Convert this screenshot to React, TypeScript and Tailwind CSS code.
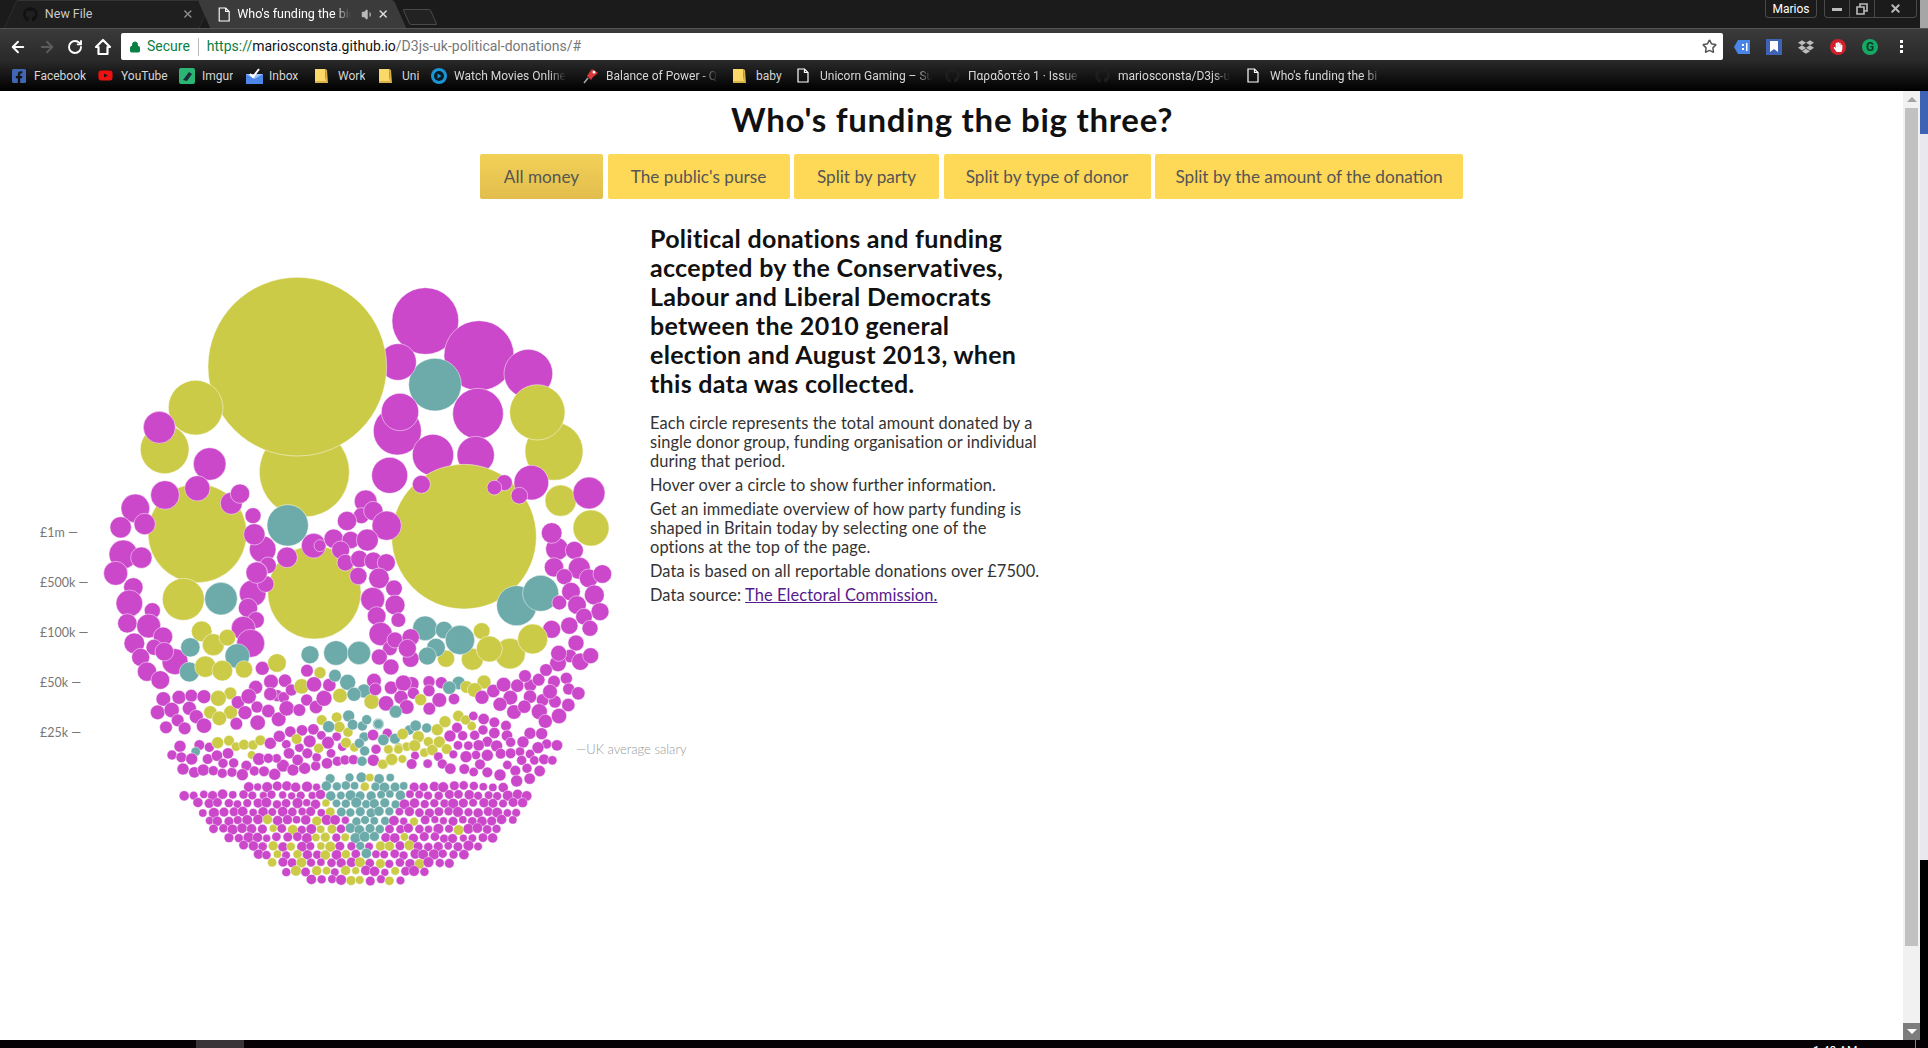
import { FaDropbox, FaFacebookSquare, FaGithub, FaHandPaper, FaYoutube } from "react-icons/fa";
import { ArrowLeft, ArrowRight, Lock, RotateCw, Star, Volume1, X } from "lucide-react";

const COLORS: Record<string, string> = { m: "#cb48cb", y: "#cccb48", t: "#6daaaa" };

type Dot = [number, number, number, string];

// circles read off the reference, grouped by the crop they were measured in (3x scale)
const groups: { ox: number; oy: number; dots: Dot[] }[] = [
  {
    ox: 320,
    oy: 260,
    dots: [
      [-17, 997, 140, "y"],
      [316, 183, 100, "m"], [477, 287, 105, "m"], [625, 341, 73, "m"], [702, 574, 87, "y"], [652, 457, 83, "y"],
      [345, 374, 79, "t"], [234, 306, 55, "m"], [474, 461, 76, "m"], [232, 513, 72, "m"], [240, 456, 56, "m"],
      [339, 585, 62, "m"], [467, 585, 56, "m"], [209, 646, 54, "m"],
    ],
  },
  {
    ox: 20,
    oy: 260,
    dots: [
      [853, 636, 135, "y"], [832, 320, 268, "y"], [527, 443, 82, "y"], [434, 568, 73, "y"], [418, 502, 48, "m"],
      [569, 612, 49, "m"], [532, 820, 148, "y"], [435, 705, 43, "m"], [532, 685, 38, "m"], [634, 730, 33, "m"],
      [660, 701, 29, "m"], [346, 745, 43, "m"], [374, 792, 32, "m"], [302, 802, 32, "m"], [699, 767, 24, "m"],
      [728, 868, 40, "m"], [703, 823, 32, "m"], [803, 796, 62, "t"], [881, 857, 37, "m"], [801, 892, 31, "m"],
      [310, 883, 43, "m"], [364, 893, 32, "m"], [287, 940, 36, "m"], [744, 916, 25, "m"], [710, 937, 32, "m"],
    ],
  },
  {
    ox: 320,
    oy: 260,
    dots: [
      [432, 830, 217, "y"], [304, 673, 27, "m"], [634, 668, 52, "m"], [553, 668, 24, "m"], [523, 683, 22, "m"],
      [598, 707, 25, "m"], [722, 722, 47, "y"], [807, 699, 48, "m"], [813, 804, 54, "y"], [137, 724, 34, "m"],
      [124, 767, 24, "m"], [160, 753, 29, "m"], [200, 797, 44, "m"], [81, 783, 29, "m"], [0, 857, 18, "m"],
      [41, 836, 29, "m"], [92, 840, 26, "m"], [142, 840, 33, "m"], [62, 870, 27, "m"], [76, 908, 25, "m"],
      [118, 897, 26, "m"], [160, 903, 27, "m"], [199, 908, 27, "m"], [115, 948, 26, "m"], [177, 955, 31, "m"],
      [711, 867, 34, "m"], [695, 819, 31, "m"], [763, 871, 27, "m"], [778, 925, 33, "m"], [702, 922, 29, "m"],
      [733, 950, 24, "m"], [806, 955, 28, "m"], [847, 942, 28, "m"],
    ],
  },
  {
    ox: 100,
    oy: 560,
    dots: [
      [100, 82, 29, "m"], [88, 130, 40, "m"], [157, 152, 24, "m"], [82, 190, 29, "m"], [146, 198, 36, "m"],
      [189, 230, 29, "m"], [103, 250, 31, "m"], [162, 262, 24, "m"], [225, 305, 39, "m"], [193, 275, 28, "m"],
      [122, 292, 27, "m"], [141, 335, 29, "m"], [181, 360, 28, "m"], [250, 118, 63, "y"], [363, 116, 49, "t"],
      [458, 100, 40, "m"], [497, 72, 25, "m"], [470, 38, 32, "m"], [444, 144, 29, "m"], [468, 180, 25, "m"],
      [430, 205, 36, "m"], [452, 250, 42, "m"], [412, 288, 37, "t"], [305, 214, 31, "y"], [340, 254, 33, "y"],
      [382, 233, 25, "y"], [271, 262, 29, "t"], [268, 336, 30, "t"], [432, 328, 26, "y"], [316, 320, 32, "y"],
      [367, 332, 31, "y"], [487, 325, 21, "m"], [531, 309, 28, "y"], [630, 284, 27, "t"], [708, 279, 37, "t"],
      [777, 279, 35, "t"], [621, 332, 19, "m"], [660, 338, 18, "y"], [818, 118, 36, "m"], [882, 85, 25, "m"],
      [885, 135, 30, "m"], [830, 168, 28, "m"], [895, 180, 22, "m"], [842, 222, 35, "m"], [870, 265, 22, "m"],
      [885, 240, 24, "m"], [838, 291, 24, "m"], [873, 321, 24, "m"],
    ],
  },
  {
    ox: 380,
    oy: 560,
    dots: [
      [410, 137, 60, "t"], [482, 100, 54, "t"], [538, 128, 22, "m"], [573, 95, 28, "m"], [643, 105, 30, "m"],
      [591, 135, 28, "m"], [660, 155, 27, "m"], [612, 170, 25, "m"], [630, 205, 24, "m"], [568, 197, 26, "m"],
      [515, 208, 27, "m"], [588, 249, 24, "m"], [570, 288, 20, "m"], [601, 305, 26, "m"], [534, 310, 25, "m"],
      [536, 280, 24, "m"], [632, 287, 24, "m"], [305, 213, 25, "y"], [198, 296, 26, "y"], [277, 298, 33, "y"],
      [390, 281, 46, "y"], [458, 237, 45, "y"], [328, 267, 39, "y"], [135, 205, 37, "t"], [192, 210, 26, "t"],
      [168, 263, 28, "t"], [142, 288, 27, "t"], [240, 240, 44, "t"], [92, 297, 25, "m"], [92, 232, 26, "m"],
      [82, 265, 27, "m"],
    ],
  },
  {
    // £50k - £100k band, left half
    ox: 100,
    oy: 560,
    dots: [
      [190, 417, 22, "m"], [237, 412, 21, "m"], [274, 407, 19, "m"], [312, 410, 21, "m"], [173, 457, 22, "m"],
      [215, 450, 23, "m"], [268, 445, 21, "m"], [289, 470, 21, "m"], [233, 481, 19, "m"], [198, 502, 19, "m"],
      [254, 505, 19, "m"], [312, 497, 23, "m"], [391, 400, 19, "y"], [392, 457, 21, "y"], [355, 415, 24, "y"],
      [331, 457, 20, "y"], [358, 475, 22, "y"], [409, 491, 19, "m"], [414, 427, 20, "m"], [467, 382, 21, "m"],
      [446, 409, 23, "m"], [471, 441, 18, "m"], [435, 458, 21, "m"], [473, 488, 23, "m"], [505, 453, 20, "m"],
      [513, 365, 22, "m"], [532, 407, 18, "m"], [511, 402, 20, "m"], [555, 362, 20, "m"], [551, 412, 17, "m"],
      [574, 390, 18, "m"], [536, 478, 22, "m"], [560, 445, 23, "m"], [598, 450, 19, "m"], [620, 420, 18, "m"],
      [648, 441, 20, "m"], [672, 415, 24, "m"], [605, 379, 23, "y"], [688, 375, 20, "m"], [642, 373, 23, "m"],
      [720, 407, 22, "y"], [705, 347, 19, "t"], [743, 367, 24, "t"], [792, 393, 21, "t"], [762, 403, 21, "t"],
      [815, 425, 23, "y"], [822, 362, 22, "m"], [826, 388, 19, "m"], [859, 430, 22, "m"], [873, 385, 18, "m"],
      [908, 378, 18, "m"], [887, 455, 19, "t"],
    ],
  },
  {
    // £50k - £100k band, right half
    ox: 380,
    oy: 560,
    dots: [
      [33, 383, 20, "m"], [95, 372, 22, "m"], [70, 369, 24, "m"], [100, 400, 18, "m"], [63, 412, 21, "m"],
      [18, 430, 23, "m"], [80, 441, 22, "m"], [147, 365, 18, "m"], [147, 392, 18, "m"], [184, 368, 18, "m"],
      [178, 420, 22, "m"], [148, 446, 19, "m"], [222, 417, 17, "m"], [122, 419, 18, "y"], [47, 455, 19, "t"],
      [236, 369, 20, "t"], [208, 383, 20, "t"], [260, 381, 19, "y"], [312, 366, 21, "y"], [284, 390, 22, "y"],
      [306, 412, 21, "m"], [340, 393, 20, "m"], [371, 374, 22, "m"], [412, 377, 20, "m"], [451, 376, 19, "m"],
      [435, 348, 19, "m"], [476, 359, 19, "m"], [498, 330, 19, "m"], [391, 413, 22, "m"], [450, 410, 20, "m"],
      [360, 433, 21, "m"], [402, 456, 22, "m"], [433, 440, 20, "m"], [488, 420, 19, "m"], [478, 455, 24, "m"],
      [522, 365, 19, "m"], [525, 425, 19, "m"], [510, 395, 22, "m"], [559, 355, 18, "m"], [566, 387, 18, "m"],
      [595, 400, 20, "m"], [565, 435, 20, "m"], [496, 484, 21, "m"], [537, 468, 23, "m"],
    ],
  },
  {
    // £25k - £50k band, left half
    ox: 100,
    oy: 560,
    dots: [
      [240, 559, 18, "m"], [298, 555, 16, "m"], [328, 562, 15, "m"], [216, 585, 15, "m"], [287, 575, 14, "t"],
      [244, 592, 16, "m"], [275, 597, 18, "m"], [249, 627, 18, "m"], [283, 637, 17, "m"], [310, 630, 18, "m"],
      [323, 597, 16, "m"], [351, 587, 17, "m"], [384, 580, 17, "m"], [369, 610, 15, "m"], [340, 632, 15, "m"],
      [367, 640, 15, "m"], [396, 637, 15, "m"], [401, 609, 15, "m"], [439, 617, 16, "m"], [427, 644, 18, "m"],
      [463, 633, 15, "m"], [455, 585, 13, "y"], [477, 597, 19, "m"], [492, 634, 16, "m"], [524, 643, 18, "m"],
      [549, 617, 19, "m"], [579, 630, 18, "m"], [614, 625, 18, "m"], [647, 618, 15, "m"], [681, 610, 17, "m"],
      [712, 604, 15, "m"], [735, 600, 15, "m"], [760, 599, 15, "m"], [820, 601, 18, "m"], [353, 548, 18, "y"],
      [387, 542, 16, "y"], [408, 560, 14, "y"], [432, 554, 16, "y"], [459, 555, 15, "y"], [481, 541, 16, "y"],
      [511, 550, 18, "m"], [538, 529, 18, "m"], [559, 553, 14, "m"], [571, 515, 17, "m"], [606, 511, 17, "m"],
      [640, 508, 17, "m"], [629, 544, 19, "m"], [567, 580, 17, "m"], [598, 563, 14, "m"], [622, 580, 16, "m"],
      [593, 600, 17, "m"], [530, 595, 14, "m"], [505, 595, 15, "m"], [650, 592, 14, "m"], [693, 580, 14, "m"],
      [664, 526, 14, "m"], [710, 530, 14, "m"], [684, 548, 19, "m"], [727, 560, 14, "m"], [590, 537, 16, "y"],
      [656, 565, 15, "y"], [665, 480, 16, "y"], [710, 472, 16, "y"], [718, 501, 17, "y"], [744, 517, 15, "y"],
      [763, 562, 14, "y"], [738, 548, 16, "y"], [686, 500, 18, "t"], [746, 468, 18, "t"], [758, 494, 16, "t"],
      [787, 498, 15, "t"], [800, 479, 15, "t"], [835, 492, 17, "t"], [792, 531, 15, "t"], [778, 550, 15, "t"],
      [850, 538, 17, "t"], [884, 537, 15, "t"], [794, 573, 15, "t"], [786, 604, 15, "t"], [819, 525, 17, "m"],
      [828, 568, 15, "m"], [895, 560, 12, "y"], [866, 569, 14, "y"], [851, 613, 14, "y"], [875, 599, 18, "y"],
    ],
  },
  {
    // £25k - £50k band, right half
    ox: 380,
    oy: 560,
    dots: [
      [-5, 492, 14, "t"], [88, 510, 15, "t"], [107, 497, 17, "t"], [140, 504, 15, "t"], [22, 520, 15, "m"],
      [10, 540, 17, "t"], [45, 536, 16, "t"], [68, 522, 17, "y"], [115, 530, 18, "y"], [145, 545, 15, "y"],
      [172, 509, 18, "y"], [195, 485, 18, "y"], [235, 468, 17, "y"], [275, 498, 14, "y"], [257, 480, 15, "y"],
      [133, 578, 14, "y"], [80, 560, 14, "y"], [104, 557, 18, "y"], [157, 570, 17, "y"], [178, 546, 18, "y"],
      [200, 567, 16, "y"], [55, 568, 14, "y"], [25, 568, 14, "y"], [8, 613, 15, "y"], [67, 597, 13, "y"],
      [35, 598, 18, "y"], [280, 468, 14, "m"], [311, 477, 17, "m"], [343, 487, 16, "m"], [378, 497, 16, "m"],
      [231, 503, 16, "m"], [210, 528, 18, "m"], [248, 527, 15, "m"], [284, 526, 15, "m"], [309, 510, 15, "m"],
      [343, 519, 17, "m"], [381, 527, 17, "m"], [322, 545, 16, "m"], [392, 547, 15, "m"], [296, 556, 17, "m"],
      [265, 557, 14, "m"], [234, 556, 14, "m"], [350, 558, 18, "m"], [220, 583, 13, "m"], [288, 585, 14, "m"],
      [258, 590, 18, "m"], [322, 586, 18, "m"], [362, 581, 16, "m"], [392, 580, 16, "m"], [450, 520, 18, "m"],
      [485, 521, 18, "m"], [500, 552, 15, "m"], [429, 546, 18, "m"], [474, 563, 18, "m"], [531, 556, 17, "m"],
      [420, 575, 14, "m"], [450, 582, 14, "m"], [425, 601, 15, "m"], [463, 601, 14, "m"], [492, 598, 16, "m"],
      [517, 601, 14, "m"], [105, 587, 13, "m"], [95, 612, 16, "m"], [143, 611, 14, "m"], [175, 590, 14, "m"],
      [187, 612, 15, "m"], [211, 626, 17, "m"], [253, 627, 16, "m"], [281, 636, 14, "m"], [300, 613, 16, "m"],
      [322, 637, 16, "m"], [360, 645, 18, "m"], [382, 615, 14, "m"], [406, 632, 16, "m"], [441, 625, 15, "m"],
      [479, 633, 17, "m"], [410, 663, 18, "m"], [449, 656, 17, "m"],
    ],
  },
];

// small repeatable random so the lower bowl is the same on every load
function rng(seed: number) {
  let s = seed;
  return () => {
    s = (s * 1664525 + 1013904223) % 4294967296;
    return s / 4294967296;
  };
}

function bowlDots() {
  const rand = rng(42);
  const out: { x: number; y: number; r: number; c: string }[] = [];
  let row = 0;
  for (let y = 778; y < 888; y += 8.5) {
    const shift = row % 2 ? 4.9 : 0;
    for (let x = 184 + shift; x < 536; x += 9.8) {
      const px = x + (rand() - 0.5) * 2.2;
      const py = y + (rand() - 0.5) * 2.2;
      const r = 3.9 + rand() * 1.5;
      const top = 775 + Math.abs(px - 370) * 0.09;
      const inside = Math.hypot((px - 359) * 0.94, py - 688) < 197;
      if (!inside || py < top) continue;
      const tealHalf = 48 * (1 - (py - 775) / 88);
      const d = Math.abs(px - 367);
      const p = rand();
      let c = "m";
      if (d < tealHalf) c = p < 0.95 ? "t" : p < 0.98 ? "y" : "m";
      else if (d < tealHalf + 9 && py > 795) c = p < 0.55 ? "y" : "m";
      else if (px > 255 && px < 425 && py > 820) {
        const near = 1 - Math.abs(px - 350) / 95;
        c = p < 0.08 + near * 0.36 ? "y" : "m";
      } else if (p < 0.025) c = "y";
      out.push({ x: px, y: py, r, c: COLORS[c] });
    }
    row++;
  }
  return out;
}

const scaleLabels = [
  { y: 537, text: "£1m —" },
  { y: 587, text: "£500k —" },
  { y: 637, text: "£100k —" },
  { y: 687, text: "£50k —" },
  { y: 737, text: "£25k —" },
];

const buttons = [
  { label: "All money", w: "w-[123px]", on: true },
  { label: "The public's purse", w: "w-[182px]", on: false },
  { label: "Split by party", w: "w-[145px]", on: false },
  { label: "Split by type of donor", w: "w-[207px]", on: false },
  { label: "Split by the amount of the donation", w: "w-[308px]", on: false },
];

function Folder() {
  return (
    <svg width="13" height="16" viewBox="0 0 13 16" className="shrink-0">
      <path d="M0 1h10l1 12h-11z" fill="#fbd968" />
      <path d="M10 1l2 1 1 13h-13v-2h11z" fill="#d9b347" />
    </svg>
  );
}

function Doc() {
  return (
    <svg width="12" height="15" viewBox="0 0 12 15" fill="none" stroke="#fff" strokeWidth="1.2" className="shrink-0">
      <path d="M1 1h6.5L11 4.5V14H1z" />
      <path d="M7.5 1v3.5H11" />
    </svg>
  );
}

const bookmarks = [
  { label: "Facebook", w: "w-[87px]", icon: <FaFacebookSquare size={16} color="#4267b2" /> },
  { label: "YouTube", w: "w-[81px]", icon: <FaYoutube size={15} color="#ee1111" /> },
  {
    label: "Imgur",
    w: "w-[67px]",
    icon: (
      <svg width="16" height="16" viewBox="0 0 16 16">
        <rect width="16" height="16" rx="2" fill="#2bb673" />
        <path d="M4 12l6-8 3 2-5 7z" fill="#1c2b3a" />
      </svg>
    ),
  },
  {
    label: "Inbox",
    w: "w-[69px]",
    icon: (
      <svg width="17" height="16" viewBox="0 0 17 16">
        <path d="M0 6h17v10H0z" fill="#4b86e8" />
        <path d="M0 6l8.5 5L17 6" fill="#9cc0f5" />
        <path d="M4 6l3 3 6-8" stroke="#fff" strokeWidth="2" fill="none" />
      </svg>
    ),
  },
  { label: "Work", w: "w-[64px]", icon: <Folder /> },
  { label: "Uni", w: "w-[52px]", icon: <Folder /> },
  {
    label: "Watch Movies Online",
    w: "w-[152px]",
    fade: true,
    icon: (
      <svg width="16" height="16" viewBox="0 0 16 16">
        <circle cx="8" cy="8" r="8" fill="#1a96d4" />
        <circle cx="8" cy="8" r="5" fill="#0b1b26" />
        <path d="M6.5 5.5l4 2.5-4 2.5z" fill="#1a96d4" />
      </svg>
    ),
  },
  {
    label: "Balance of Power - Q",
    w: "w-[150px]",
    fade: true,
    icon: (
      <svg width="16" height="16" viewBox="0 0 16 16">
        <path d="M9 1l6 4-5 4-2 3-4-4 2-3z" fill="#d93a3a" />
        <path d="M5 10l-4 5" stroke="#aaa" strokeWidth="1.5" />
        <circle cx="11" cy="4" r="1.5" fill="#fff" />
      </svg>
    ),
  },
  { label: "baby", w: "w-[64px]", icon: <Folder /> },
  { label: "Unicorn Gaming – Su", w: "w-[148px]", fade: true, icon: <Doc /> },
  { label: "Παραδοτέο 1 · Issue", w: "w-[150px]", fade: true, icon: <FaGithub size={15} color="#1f1f1f" /> },
  { label: "mariosconsta/D3js-ul", w: "w-[152px]", fade: true, icon: <FaGithub size={15} color="#1f1f1f" /> },
  { label: "Who's funding the bi", w: "w-[136px]", fade: true, icon: <Doc /> },
];

function Tabs() {
  return (
    <div className="flex h-[28px] bg-[#1b1b1b] font-['Roboto',sans-serif] text-[12.5px]">
      <div className="ml-[10px] flex h-[28px] w-[196px] -skew-x-[24deg] items-center rounded-t-[3px] border border-b-0 border-[#333] bg-[#1f1f1f]">
        <div className="flex w-full skew-x-[24deg] items-center pl-[12px] pr-[11px] text-[#c9c9c9]">
          <FaGithub size={15} color="#111" className="shrink-0" />
          <span className="ml-[7px] flex-1">New File</span>
          <X size={12} color="#8a8a8a" strokeWidth={3} />
        </div>
      </div>
      <div className="-ml-[2px] flex h-[28px] w-[196px] skew-x-[24deg] items-center rounded-t-[3px] bg-[#3b3b3b]">
        <div className="flex w-full -skew-x-[24deg] items-center pl-[14px] text-white">
          <Doc />
          <span className="ml-[7px] w-[114px] overflow-hidden whitespace-nowrap [mask-image:linear-gradient(to_right,#000_85%,transparent)]">
            Who's funding the big
          </span>
          <Volume1 size={13} color="#bbb" fill="#bbb" className="ml-[10px]" />
          <X size={12} color="#ddd" strokeWidth={3} className="ml-[3px]" />
        </div>
      </div>
      <div className="ml-[6px] mt-[9px] h-[16px] w-[28px] skew-x-[24deg] rounded-[2px] border border-[#4a4a4a] bg-[#222]" />
      <div className="flex-1" />
      <div className="mr-[7px] flex h-[18px] w-[52px] items-center justify-center rounded-b-[4px] border border-t-0 border-[#4a4a4a] text-[12px] text-white">
        Marios
      </div>
      <div className="mr-[3px] flex h-[18px] w-[93px] rounded-b-[4px] border border-t-0 border-[#4a4a4a] text-[#ccc]">
        <div className="flex w-[25px] items-center justify-center border-r border-[#4a4a4a]">
          <div className="mt-[2px] h-[3px] w-[10px] bg-[#bbb]" />
        </div>
        <div className="flex w-[25px] items-center justify-center border-r border-[#4a4a4a]">
          <svg width="12" height="12" viewBox="0 0 12 12" fill="none" stroke="#bbb" strokeWidth="1.6">
            <path d="M1 4h7v7H1z" />
            <path d="M4 4V1h7v7H8" />
          </svg>
        </div>
        <div className="flex flex-1 items-center justify-center">
          <X size={13} color="#bbb" strokeWidth={3.5} />
        </div>
      </div>
      <div className="h-[28px] w-[8px] bg-[#a6a6a6]" />
    </div>
  );
}

function Toolbar() {
  return (
    <div className="flex h-[32px] items-center border-t border-[#555] bg-[linear-gradient(#3a3a3a,#2a2a2a)] pt-[4px] font-['Roboto',sans-serif]">
      <div className="flex w-[121px] items-center pl-[9px]">
        <ArrowLeft size={18} color="#fff" strokeWidth={2.5} />
        <ArrowRight size={18} color="#5c5c5c" strokeWidth={2.5} className="ml-[11px]" />
        <RotateCw size={16} color="#fff" strokeWidth={2.8} className="ml-[11px]" />
        <svg width="18" height="18" viewBox="0 0 18 18" fill="none" stroke="#fff" strokeWidth="2.2" className="ml-[11px]">
          <path d="M9 2L2 9h2.5v7h9V9H16z" strokeLinejoin="round" />
        </svg>
      </div>
      <div className="flex h-[27px] w-[1602px] items-center rounded-[2px] bg-white text-[14px]">
        <Lock size={12} color="#0b8043" fill="#0b8043" className="ml-[8px]" />
        <span className="ml-[6px] text-[#0b8043]">Secure</span>
        <div className="ml-[8px] mr-[8px] h-[18px] w-px bg-[#bbb]" />
        <span className="text-[#0b8043]">https://</span>
        <span className="text-[#111]">mariosconsta.github.io</span>
        <span className="text-[#777]">/D3js-uk-political-donations/#</span>
        <div className="flex-1" />
        <Star size={15} color="#555" strokeWidth={2.4} className="mr-[6px]" />
      </div>
      <div className="relative flex flex-1 items-center">
        <svg width="16" height="14" viewBox="0 0 16 14" className="ml-[11px]">
          <path d="M4 0h12v14H4L0 7z" fill="#4a86e8" />
          <path d="M8 4h2v2H8zM8 8h2v2H8zM12 3h1.5v8H12z" fill="#fff" />
        </svg>
        <div className="ml-[16px] flex h-[16px] w-[16px] items-center justify-center bg-[#3f63b4]">
          <svg width="8" height="11" viewBox="0 0 8 11">
            <path d="M0 0h8v11L4 8l-4 3z" fill="#fff" />
          </svg>
        </div>
        <FaDropbox size={16} color="#bdbdbd" className="ml-[16px]" />
        <div className="ml-[16px] flex h-[16px] w-[16px] items-center justify-center rounded-full bg-[#d3202c]">
          <FaHandPaper size={10} color="#fff" />
        </div>
        <div className="ml-[16px] flex h-[16px] w-[16px] items-center justify-center rounded-full bg-[#17a865] text-[12px] font-bold leading-none text-[#0b3d2c]">
          G
        </div>
        <div className="ml-[22px] flex flex-col gap-[2px]">
          <div className="h-[3px] w-[3px] bg-white" />
          <div className="h-[3px] w-[3px] bg-white" />
          <div className="h-[3px] w-[3px] bg-white" />
        </div>
      </div>
    </div>
  );
}

function Bookmarks() {
  return (
    <div className="flex h-[31px] items-center bg-[linear-gradient(#2a2a2a,#000)] pl-[11px] font-['Roboto',sans-serif] text-[12px] text-[#d6d6d6]">
      {bookmarks.map((b) => (
        <div key={b.label + b.w} className={`${b.w} flex shrink-0 items-center`}>
          <span className="flex w-[23px] shrink-0">{b.icon}</span>
          <span
            className={`overflow-hidden whitespace-nowrap ${
              b.fade ? "w-[112px] [mask-image:linear-gradient(to_right,#000_85%,transparent)]" : ""
            }`}
          >
            {b.label}
          </span>
        </div>
      ))}
    </div>
  );
}

function BubbleChart() {
  const bowl = bowlDots();
  return (
    <svg width="650" height="680" viewBox="0 220 650 680" className="mt-[21px] shrink-0 overflow-visible">
      {groups.map((g, gi) =>
        g.dots.map(([x, y, r, c], i) => (
          <circle
            key={`${gi}-${i}`}
            cx={g.ox + x / 3}
            cy={g.oy + y / 3}
            r={r / 3}
            fill={COLORS[c]}
            stroke="#fff"
            strokeOpacity={0.8}
            strokeWidth={0.6}
          />
        ))
      )}
      {bowl.map((d, i) => (
        <circle key={i} cx={d.x} cy={d.y} r={d.r} fill={d.c} stroke="#fff" strokeOpacity={0.8} strokeWidth={0.5} />
      ))}
      {scaleLabels.map((l) => (
        <text key={l.y} x="40" y={l.y} fontSize="12.5" fill="#777">
          {l.text}
        </text>
      ))}
      <text x="576" y="754" fontSize="13" fontWeight="300" fill="#999">
        —UK average salary
      </text>
    </svg>
  );
}

export default function App() {
  return (
    <div className="flex h-[1048px] w-[1928px] flex-col overflow-hidden bg-black">
      <Tabs />
      <Toolbar />
      <Bookmarks />
      <div className="flex h-[949px]">
        <div className="w-[1903px] overflow-hidden bg-white font-['Lato',sans-serif] text-[#111]">
          <h1 className="ml-[731px] mt-[9px] h-[39px] whitespace-nowrap text-[33px] font-bold leading-[39px] tracking-[0.72px]">
            Who's funding the big three?
          </h1>
          <div className="ml-[480px] mt-[15px] flex gap-[4.5px]">
            {buttons.map((b) => (
              <div
                key={b.label}
                className={`flex h-[45px] items-center justify-center rounded-[2px] text-[17.2px] font-normal text-[#555] ${b.w} ${
                  b.on ? "bg-[linear-gradient(#f2d158,#e2bd4d)]" : "bg-[#fed857]"
                }`}
              >
                {b.label}
              </div>
            ))}
          </div>
          <div className="flex">
            <BubbleChart />
            <div className="w-[420px] pt-[25px]">
              <h2 className="whitespace-nowrap text-[25px] font-bold leading-[29px] tracking-[0.3px] text-[#111]">
                Political donations and funding
                <br />
                accepted by the Conservatives,
                <br />
                Labour and Liberal Democrats
                <br />
                between the 2010 general
                <br />
                election and August 2013, when
                <br />
                this data was collected.
              </h2>
              <div className="mt-[15px] flex flex-col gap-[5px] whitespace-nowrap text-[16.4px] font-normal leading-[19px] tracking-[0.1px] text-[#333]">
                <p>
                  Each circle represents the total amount donated by a
                  <br />
                  single donor group, funding organisation or individual
                  <br />
                  during that period.
                </p>
                <p>Hover over a circle to show further information.</p>
                <p>
                  Get an immediate overview of how party funding is
                  <br />
                  shaped in Britain today by selecting one of the
                  <br />
                  options at the top of the page.
                </p>
                <p>Data is based on all reportable donations over £7500.</p>
                <p>
                  Data source: <a className="text-[#551a8b] underline">The Electoral Commission.</a>
                </p>
              </div>
            </div>
          </div>
        </div>
        {/* page scrollbar */}
        <div className="flex w-[17px] flex-col items-center bg-[#f1f1f1]">
          <div className="flex h-[17px] w-full items-center justify-center">
            <div className="h-0 w-0 border-x-[5px] border-b-[5px] border-x-transparent border-b-[#a3a3a3]" />
          </div>
          <div className="h-[838px] w-[13px] bg-[#c1c1c1]" />
          <div className="flex-1" />
          <div className="flex h-[17px] w-full items-center justify-center bg-[#7d7d7d]">
            <div className="h-0 w-0 border-x-[5px] border-t-[5px] border-x-transparent border-t-white" />
          </div>
        </div>
        {/* sliver of the window behind */}
        <div className="flex w-[8px] flex-col">
          <div className="h-[43px] bg-[#3f63b4]" />
          <div className="h-[726px] bg-[#e8e8ee]" />
          <div className="flex-1 bg-black" />
        </div>
      </div>
      {/* taskbar edge */}
      <div className="relative h-[8px] shrink-0 overflow-hidden bg-[#060206]">
        <div className="absolute left-[196px] top-0 h-[8px] w-[48px] bg-[#3a3438]" />
        <span className="absolute left-[1813px] top-[4px] font-['Roboto',sans-serif] text-[12px] leading-[14px] text-white">
          1:48 AM
        </span>
        <div className="absolute left-[1915px] top-0 h-[8px] w-px bg-[#888]" />
      </div>
    </div>
  );
}
